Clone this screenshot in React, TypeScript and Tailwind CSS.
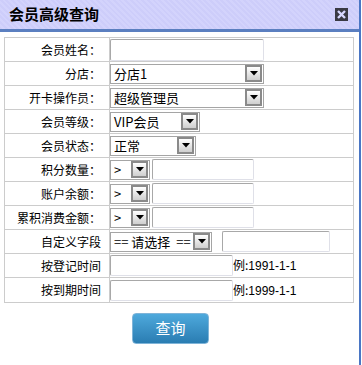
import React from "react";

const cjk = { fontFamily: '"Noto Sans CJK SC", "Noto Sans", sans-serif' };

function Arrow() {
  return (
    <div className="ml-auto mr-px flex h-[17px] w-[17px] shrink-0 items-center justify-center border-2 border-[#8a8a8a] bg-gradient-to-b from-[#ffffff] to-[#cfcfcf]">
      <svg width="8" height="5" viewBox="0 0 8 5">
        <path d="M0 0h8L4 4.5z" fill="#000" />
      </svg>
    </div>
  );
}

function Select({ text, className }: { text: string; className: string }) {
  return (
    <div className={`flex h-[20px] items-center border border-[#a5a5a5] bg-white pl-[3px] text-[13px] leading-none text-black ${className}`}>
      <span className="whitespace-pre">{text}</span>
      <Arrow />
    </div>
  );
}

function Input({ className }: { className: string }) {
  return (
    <div className={`rounded-[2px] border border-t-[#a8a8a8] border-l-[#a8a8a8] border-b-[#dfe0e8] border-r-[#dfe0e8] bg-white ${className}`} />
  );
}

const rows: { label: string; field: React.ReactNode }[] = [
  { label: "会员姓名：", field: <Input className="h-[22px] w-[154px]" /> },
  { label: "分店：", field: <Select text="分店1" className="w-[154px]" /> },
  { label: "开卡操作员：", field: <Select text="超级管理员" className="w-[154px]" /> },
  { label: "会员等级：", field: <Select text="VIP会员" className="h-[19px] w-[90px]" /> },
  { label: "会员状态：", field: <Select text="正常" className="w-[86px]" /> },
  {
    label: "积分数量：",
    field: (
      <>
        <Select text=">" className="w-[40px]" />
        <Input className="ml-[2px] h-[21px] w-[102px]" />
      </>
    ),
  },
  {
    label: "账户余额：",
    field: (
      <>
        <Select text=">" className="w-[40px]" />
        <Input className="ml-[2px] h-[21px] w-[102px]" />
      </>
    ),
  },
  {
    label: "累积消费金额：",
    field: (
      <>
        <Select text=">" className="w-[40px]" />
        <Input className="ml-[2px] h-[21px] w-[102px]" />
      </>
    ),
  },
  {
    label: "自定义字段",
    field: (
      <>
        <Select text="== 请选择  ==" className="w-[102px]" />
        <Input className="ml-[10px] h-[21px] w-[108px]" />
      </>
    ),
  },
  {
    label: "按登记时间",
    field: (
      <>
        <Input className="h-[21px] w-[123px]" />
        <span className="text-[12px] text-black">
          例:<span style={{ fontFamily: '"Liberation Sans", sans-serif' }}>1991-1-1</span>
        </span>
      </>
    ),
  },
  {
    label: "按到期时间",
    field: (
      <>
        <Input className="h-[21px] w-[123px]" />
        <span className="text-[12px] text-black">
          例:<span style={{ fontFamily: '"Liberation Sans", sans-serif' }}>1999-1-1</span>
        </span>
      </>
    ),
  },
];

export default function App() {
  return (
    <div className="h-[365px] w-[361px] border-r-2 border-[#4a76c4] bg-white" style={cjk}>
      {/* title bar */}
      <div className="flex h-[32px] items-center border-b-[3px] border-[#5b7fc0] bg-[repeating-linear-gradient(45deg,#cdcdfa_0px,#cdcdfa_2px,#d3d3fc_2px,#d3d3fc_4px)] pl-[9px] pr-[11px]">
        <span className="text-[15px] font-bold text-black">会员高级查询</span>
        <svg className="ml-auto" width="13" height="13" viewBox="0 0 13 13">
          <rect width="13" height="13" fill="#3a3a44" />
          <path d="M3 3l7 7M10 3l-7 7" stroke="#d8d8ff" strokeWidth="2.4" />
        </svg>
      </div>

      {/* form table */}
      <div className="ml-[4px] mt-[5px] w-[350px] divide-y divide-[#cccccc] border border-[#cccccc]">
        {rows.map((r) => (
          <div key={r.label} className="flex h-[24px]">
            <div className="flex w-[105px] shrink-0 items-center justify-end border-r border-[#cccccc] pr-[8px] text-[12px] text-black">
              {r.label}
            </div>
            <div className="flex items-center">{r.field}</div>
          </div>
        ))}
      </div>

      <button className="ml-[132px] mt-[10px] flex h-[31px] w-[77px] items-center justify-center rounded-[4px] border border-[#7fb4d8] bg-gradient-to-b from-[#4ea9dc] to-[#2a7db2] text-[15px] text-white">
        查询
      </button>
    </div>
  );
}
